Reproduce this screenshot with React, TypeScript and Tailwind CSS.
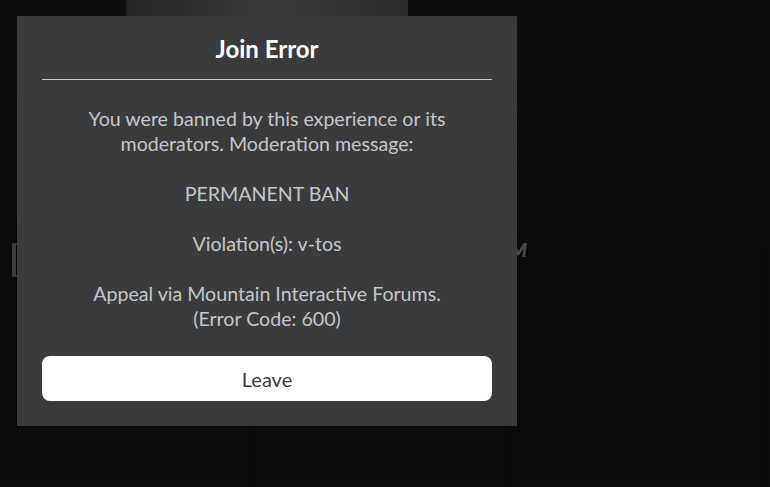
import React from "react";

export default function App() {
  const font = { fontFamily: '"Lato", "Open Sans", sans-serif' };
  return (
    <div
      className="relative w-[770px] h-[487px] overflow-hidden bg-gradient-to-b from-[#0e0f11] via-[#0a0b0d] to-[#0a0b0d]"
      style={font}
    >
      {/* background scene */}
      <div className="absolute left-[126px] top-0 w-[282px] h-[40px] bg-gradient-to-r from-[#252525] via-[#3a3a3a] to-[#2c2c2c]" />
      <div className="absolute left-[12px] top-[243px] w-[6px] h-[34px] border-l-[4px] border-y-[2px] border-[#3b3b3b]" />
      <div className="absolute right-[243px] top-[238px] text-[19px] font-extrabold italic text-[#4a4a4a] leading-[24px]">
        NM
      </div>

      {/* dialog */}
      <div className="relative ml-[17px] mt-[16px] w-[500px] h-[410px] bg-[#393b3d] px-[25px] flex flex-col">
        <div className="pt-[18px] h-[63px] text-center text-[24px] font-bold text-white leading-[30px]">
          Join Error
        </div>
        <div className="h-px bg-[#c4c4c4]" />
        <div className="pt-[26px] text-center text-[19.6px] leading-[25px] text-[#c6c6c6]">
          <p>You were banned by this experience or its</p>
          <p>moderators. Moderation message:</p>
          <p className="mt-[25px]">PERMANENT BAN</p>
          <p className="mt-[25px]">Violation(s): v-tos</p>
          <p className="mt-[25px]">Appeal via Mountain Interactive Forums.</p>
          <p>(Error Code: 600)</p>
        </div>
        <div className="mt-auto mb-[25px] h-[45px] rounded-[8px] bg-white flex items-center justify-center text-[20px] text-[#393b3d]">
          Leave
        </div>
      </div>
    </div>
  );
}
